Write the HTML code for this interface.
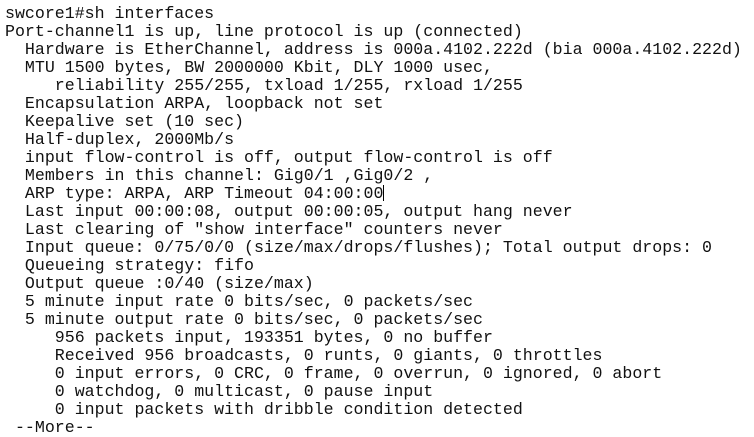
<!DOCTYPE html>
<html><head><style>
html,body{margin:0;padding:0;background:#fff;width:754px;height:436px;overflow:hidden}
pre{margin:0;position:absolute;left:5px;top:4.5px;font-family:"Liberation Mono",monospace;font-size:16.6px;line-height:18px;color:#111}
.c{display:inline-block;width:1px;height:16px;background:#000;vertical-align:-3px}
</style></head><body>
<pre>swcore1#sh interfaces
Port-channel1 is up, line protocol is up (connected)
  Hardware is EtherChannel, address is 000a.4102.222d (bia 000a.4102.222d)
  MTU 1500 bytes, BW 2000000 Kbit, DLY 1000 usec,
     reliability 255/255, txload 1/255, rxload 1/255
  Encapsulation ARPA, loopback not set
  Keepalive set (10 sec)
  Half-duplex, 2000Mb/s
  input flow-control is off, output flow-control is off
  Members in this channel: Gig0/1 ,Gig0/2 ,
  ARP type: ARPA, ARP Timeout 04:00:00<span class="c"></span>
  Last input 00:00:08, output 00:00:05, output hang never
  Last clearing of "show interface" counters never
  Input queue: 0/75/0/0 (size/max/drops/flushes); Total output drops: 0
  Queueing strategy: fifo
  Output queue :0/40 (size/max)
  5 minute input rate 0 bits/sec, 0 packets/sec
  5 minute output rate 0 bits/sec, 0 packets/sec
     956 packets input, 193351 bytes, 0 no buffer
     Received 956 broadcasts, 0 runts, 0 giants, 0 throttles
     0 input errors, 0 CRC, 0 frame, 0 overrun, 0 ignored, 0 abort
     0 watchdog, 0 multicast, 0 pause input
     0 input packets with dribble condition detected
 --More--</pre>
</body></html>
